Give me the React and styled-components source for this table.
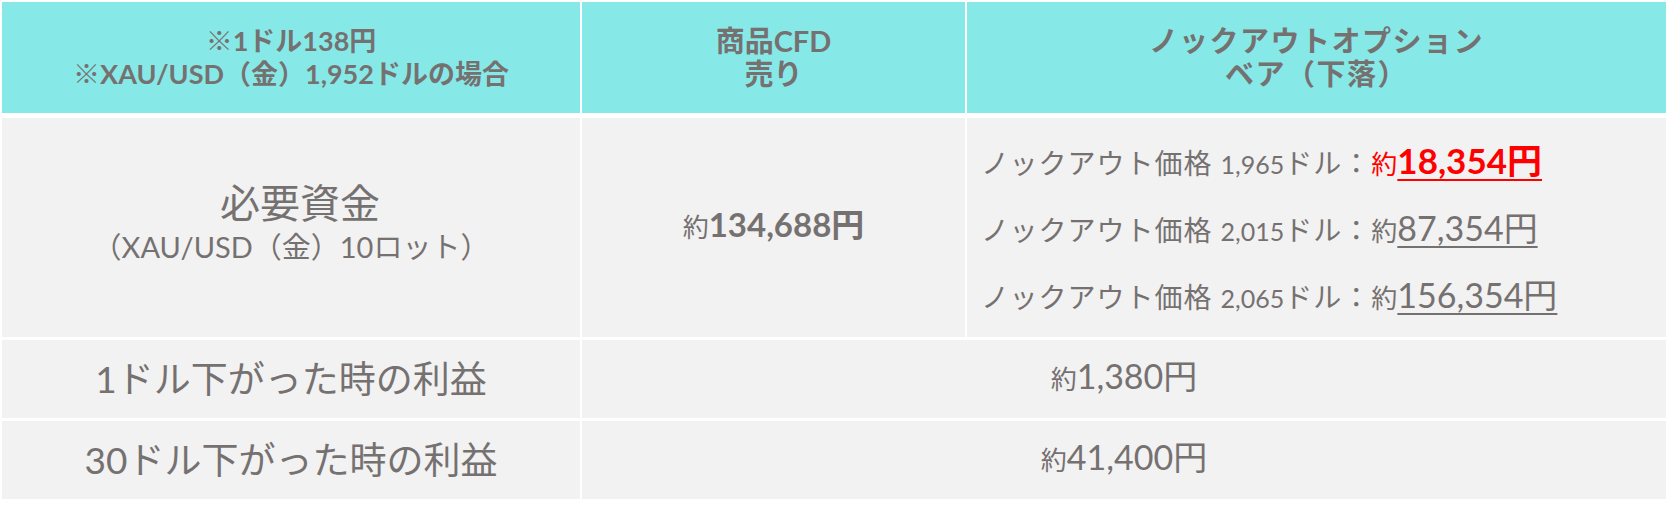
import React from 'react';
import styled, { createGlobalStyle } from 'styled-components';

const GlobalStyle = createGlobalStyle`
  body {
    margin: 0;
    background: #ffffff;
    font-family: Lato, "Noto Sans CJK JP", sans-serif;
    color: #767171;
    text-spacing-trim: space-all;
  }
`

const Page = styled.div`
  width: 1664px;
  padding: 2px;
  display: flex;
  flex-direction: column;
  gap: 5px;
`

const HeaderRow = styled.div`
  display: grid;
  grid-template-columns: 578px 383px 699px;
  grid-template-rows: 111px;
  column-gap: 2px;
`

const HeadCell = styled.div`
  background: #87e9e7;
  display: flex;
  flex-direction: column;
  align-items: center;
  justify-content: center;
  padding-bottom: 2px;
  box-sizing: border-box;
  font-weight: 700;
  font-size: ${p => p.$size || 27}px;
  line-height: 33px;
  text-align: center;
  letter-spacing: ${p => p.$spread || 0}px;
`

const Body = styled.div`
  display: grid;
  grid-template-columns: 578px 383px 699px;
  grid-template-rows: 219px 78px 78px;
  gap: 3px 2px;
`

const Cell = styled.div`
  background: #f2f2f2;
  display: flex;
  flex-direction: column;
  align-items: ${p => (p.$left ? 'flex-start' : 'center')};
  justify-content: center;
  grid-column: ${p => (p.$span ? 'span 2' : 'auto')};
  padding-left: ${p => (p.$left ? '14px' : '0')};
  box-sizing: border-box;
  text-align: ${p => (p.$left ? 'left' : 'center')};
`

const Title = styled.div`
  font-size: 40px;
  line-height: 46px;
  padding-left: 18px;
`

const Sub = styled.div`
  font-size: 29px;
  line-height: 42px;
  margin-bottom: 8px;
`

const Label = styled.div`
  font-size: 37px;
  line-height: 44px;
`

const Small = styled.span`
  font-size: 26px;
  color: ${p => (p.$red ? '#ff0000' : 'inherit')};
`

const Amount = styled.span`
  font-size: ${p => p.$size || 34}px;
  font-weight: ${p => (p.$bold ? 700 : 400)};
  color: ${p => (p.$red ? '#ff0000' : 'inherit')};
  text-decoration: ${p => (p.$under ? 'underline' : 'none')};
  text-decoration-thickness: 2px;
  text-underline-offset: 5px;
`

const ValueLine = styled.div`
  line-height: 44px;
  white-space: nowrap;
`

const KnockList = styled.div`
  display: flex;
  flex-direction: column;
  gap: 16px;
  padding-top: 6px;
`

const KoLabel = styled.span`
  font-size: 28px;
  letter-spacing: 1px;
`

const KoPrice = styled.span`
  font-size: 25px;
`

const knockouts = [
  { price: '1,965', amount: '18,354円', red: true },
  { price: '2,015', amount: '87,354円' },
  { price: '2,065', amount: '156,354円' },
];

export default function App() {
  return (
    <>
      <GlobalStyle />
      <Page>
        <HeaderRow>
          <HeadCell>
            <div>※1ドル138円</div>
            <div>※XAU/USD（金）1,952ドルの場合</div>
          </HeadCell>
          <HeadCell $size={29}>
            <div>商品CFD</div>
            <div>売り</div>
          </HeadCell>
          <HeadCell $size={29} $spread={1.5}>
            <div>ノックアウトオプション</div>
            <div>ベア（下落）</div>
          </HeadCell>
        </HeaderRow>
        <Body>
          <Cell>
            <Title>必要資金</Title>
            <Sub>（XAU/USD（金）10ロット）</Sub>
          </Cell>
          <Cell>
            <ValueLine>
              <Small>約</Small>
              <Amount $bold $size={33}>134,688円</Amount>
            </ValueLine>
          </Cell>
          <Cell $left>
            <KnockList>
              {knockouts.map(k => (
                <ValueLine key={k.price}>
                  <KoLabel>ノックアウト価格 </KoLabel>
                  <KoPrice>{k.price}</KoPrice>
                  <KoLabel>ドル：</KoLabel>
                  <Small $red={k.red}>約</Small>
                  <Amount $under $red={k.red} $bold={k.red} $size={k.red ? 35 : 34}>{k.amount}</Amount>
                </ValueLine>
              ))}
            </KnockList>
          </Cell>
          <Cell>
            <Label>1ドル下がった時の利益</Label>
          </Cell>
          <Cell $span>
            <ValueLine>
              <Small>約</Small>
              <Amount>1,380円</Amount>
            </ValueLine>
          </Cell>
          <Cell>
            <Label>30ドル下がった時の利益</Label>
          </Cell>
          <Cell $span>
            <ValueLine>
              <Small>約</Small>
              <Amount>41,400円</Amount>
            </ValueLine>
          </Cell>
        </Body>
      </Page>
    </>
  );
}
